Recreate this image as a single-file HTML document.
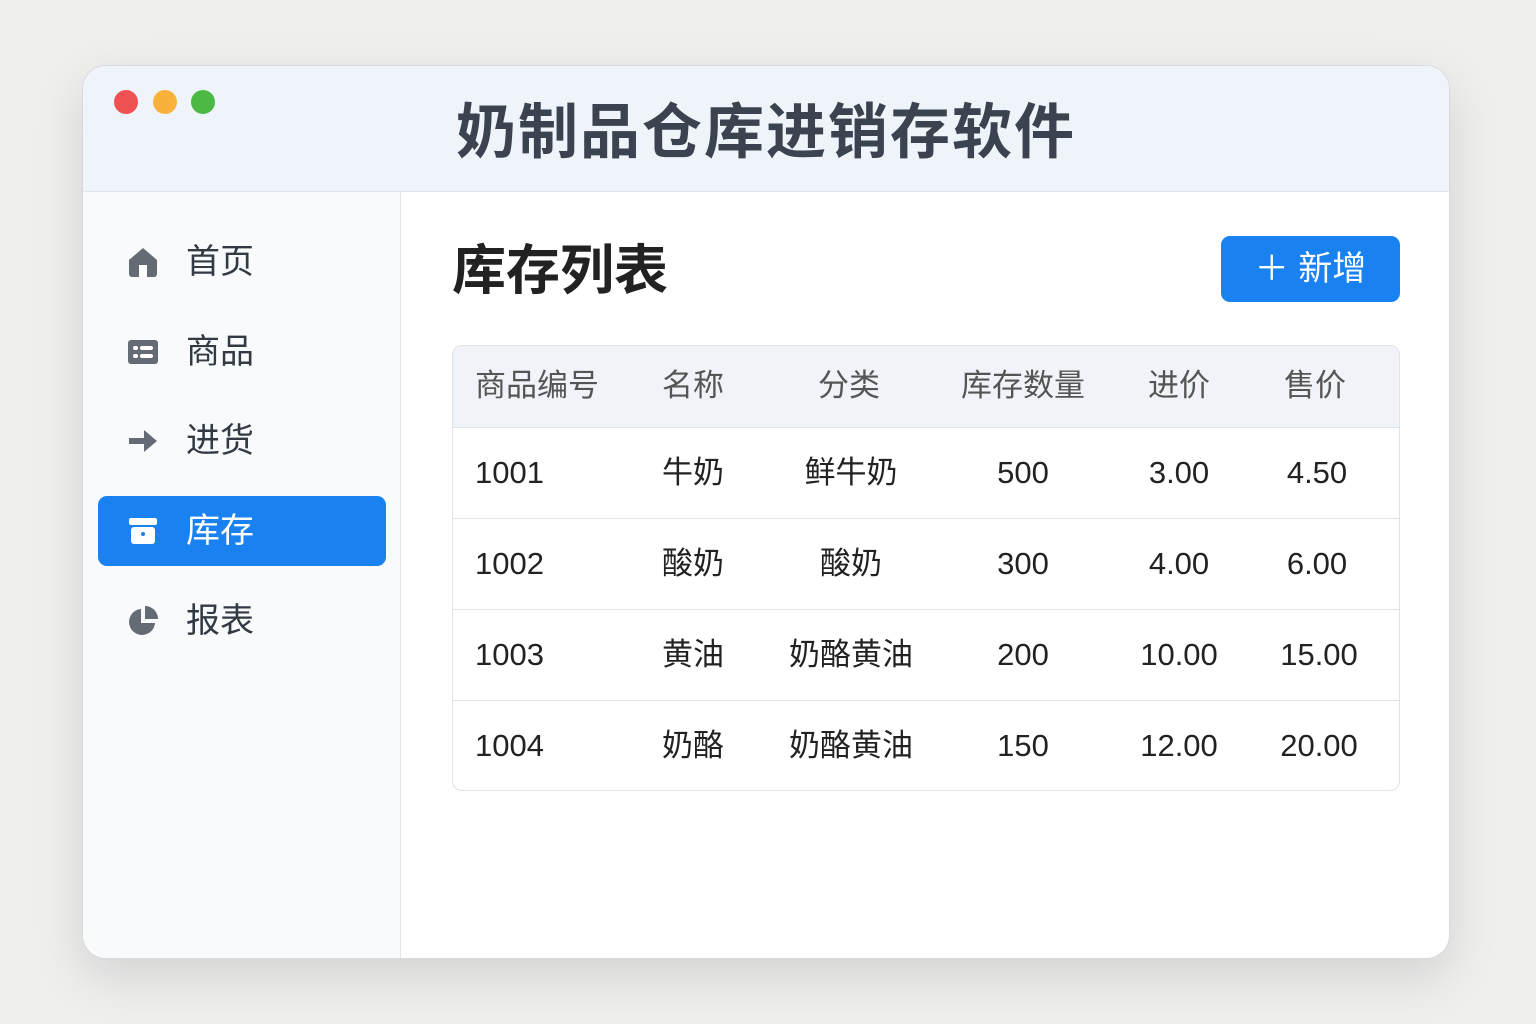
<!DOCTYPE html>
<html><head><meta charset="utf-8"><style>
*{margin:0;padding:0;box-sizing:border-box}
body{width:1536px;height:1024px;background:#efefee;font-family:"Liberation Sans","Noto Sans CJK SC",sans-serif;position:relative;overflow:hidden}
.win{position:absolute;left:82px;top:65px;width:1368px;height:894px;background:#fff;border-radius:24px;border:1px solid #d8dadd;overflow:hidden;box-shadow:0 18px 50px rgba(0,0,0,.12)}
.hdr{position:absolute;left:0;top:0;width:100%;height:126px;background:#eff4fa;border-bottom:1px solid #dfe4ea}
.dot{position:absolute;top:24px;width:24px;height:24px;border-radius:50%}
.ttl{position:absolute;left:0;width:100%;top:18px;text-align:center;font-size:60px;font-weight:bold;color:#3a434f;letter-spacing:2px}
.side{position:absolute;left:0;top:126px;width:318px;bottom:0;background:#f8fafc;border-right:1px solid #e2e5e9}
.it{position:absolute;left:15px;width:288px;height:70px;border-radius:9px;color:#333a44;font-size:34px}
.it span{position:absolute;left:88px;top:13px;line-height:44px}
.it svg{position:absolute;left:29px;top:19px}
.act{background:#1a82f0;color:#fff}
.h2{position:absolute;left:369px;top:170px;font-size:54px;font-weight:bold;color:#222;line-height:70px}
.btn{position:absolute;left:1138px;top:170px;width:179px;height:66px;background:#1a82f0;border-radius:9px;color:#fff;font-size:34px;line-height:66px;text-align:center}
.tbl{position:absolute;left:369px;top:279px;width:948px;height:446px;border:1px solid #dfe2e6;border-radius:10px;overflow:hidden}
.row{position:absolute;left:0;width:100%;height:91px;border-top:1px solid #dfe2e6;font-size:31px;color:#222}
.row.h{top:0;height:81px;border-top:none;background:#f0f4f8;color:#555}
.c{position:absolute;top:0;line-height:90px;transform:translateX(-50%);white-space:nowrap}
.h .c{line-height:80px}
.c0{left:22px;transform:none}
</style></head><body>
<div class="win">
<div class="hdr">
<div class="dot" style="left:31px;background:#f05152"></div>
<div class="dot" style="left:70px;background:#f8b23a"></div>
<div class="dot" style="left:108px;background:#4cb945"></div>
<div class="ttl">奶制品仓库进销存软件</div>
</div>
<div class="side">
<div class="it" style="top:35px"><svg width="32" height="32" viewBox="0 0 32 32"><path d="M2 14 L16 2 L30 14 V28 a3 3 0 0 1 -3 3 H5 a3 3 0 0 1 -3 -3Z" fill="#646b74"/><rect x="12" y="19" width="8" height="12" fill="#fff"/></svg><span>首页</span></div>
<div class="it" style="top:125px"><svg width="32" height="32" viewBox="0 0 32 32"><rect x="1" y="4" width="30" height="24" rx="3" fill="#646b74"/><rect x="6" y="10" width="5" height="4" rx="2" fill="#fff"/><rect x="13" y="10" width="13" height="4" rx="2" fill="#fff"/><rect x="6" y="18" width="5" height="4" rx="2" fill="#fff"/><rect x="13" y="18" width="13" height="4" rx="2" fill="#fff"/></svg><span>商品</span></div>
<div class="it" style="top:214px"><svg width="32" height="32" viewBox="0 0 32 32"><path d="M2 13 H17 V5 L30 16 L17 27 V19 H2Z" fill="#646b74"/></svg><span>进货</span></div>
<div class="it act" style="top:304px"><svg width="32" height="32" viewBox="0 0 32 32"><rect x="2" y="3" width="28" height="7" rx="2" fill="#fff"/><rect x="4" y="12" width="24" height="17" rx="3" fill="#fff"/><circle cx="16" cy="19" r="2" fill="#1a82f0"/></svg><span>库存</span></div>
<div class="it" style="top:394px"><svg width="32" height="32" viewBox="0 0 32 32"><path d="M14 4 A13 13 0 1 0 28 18 H14Z" fill="#646b74"/><path d="M18 1 A13 13 0 0 1 31 14 H18Z" fill="#646b74"/></svg><span>报表</span></div>
</div>
<div class="h2">库存列表</div>
<div class="btn">＋ 新增</div>
<div class="tbl">
<div class="row h"><div class="c c0">商品编号</div><div class="c" style="left:240px">名称</div><div class="c" style="left:396px">分类</div><div class="c" style="left:570px">库存数量</div><div class="c" style="left:726px">进价</div><div class="c" style="left:862px">售价</div></div>
<div class="row" style="top:81px"><div class="c c0">1001</div><div class="c" style="left:240px">牛奶</div><div class="c" style="left:398px">鲜牛奶</div><div class="c" style="left:570px">500</div><div class="c" style="left:726px">3.00</div><div class="c" style="left:864px">4.50</div></div>
<div class="row" style="top:172px"><div class="c c0">1002</div><div class="c" style="left:240px">酸奶</div><div class="c" style="left:398px">酸奶</div><div class="c" style="left:570px">300</div><div class="c" style="left:726px">4.00</div><div class="c" style="left:864px">6.00</div></div>
<div class="row" style="top:263px"><div class="c c0">1003</div><div class="c" style="left:240px">黄油</div><div class="c" style="left:398px">奶酪黄油</div><div class="c" style="left:570px">200</div><div class="c" style="left:726px">10.00</div><div class="c" style="left:866px">15.00</div></div>
<div class="row" style="top:354px"><div class="c c0">1004</div><div class="c" style="left:240px">奶酪</div><div class="c" style="left:398px">奶酪黄油</div><div class="c" style="left:570px">150</div><div class="c" style="left:726px">12.00</div><div class="c" style="left:866px">20.00</div></div>
</div>
</div>
</body></html>
